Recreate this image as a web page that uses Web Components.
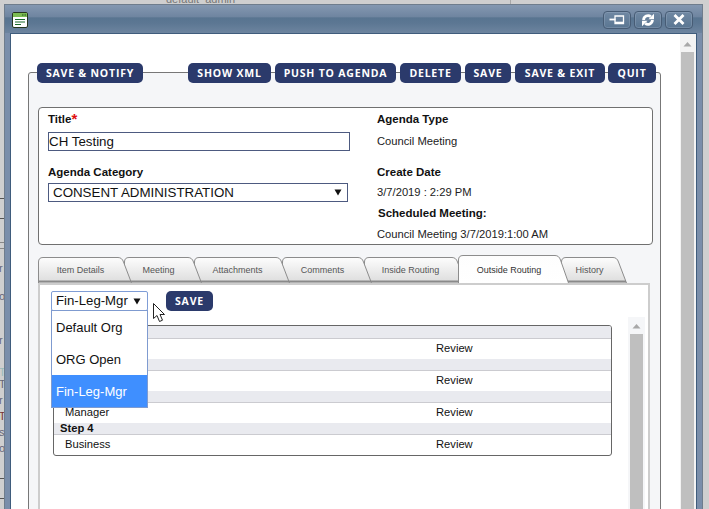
<!DOCTYPE html>
<html lang="en">
<head>
<meta charset="utf-8">
<title>Agenda Item</title>
<style>
  html, body { margin: 0; padding: 0; width: 709px; height: 509px; overflow: hidden; }
  body { font-family: "Liberation Sans", Arial, sans-serif; color: #111; }
  agenda-form { display: block; }
</style>
</head>
<body>
<page-backdrop>
  <app-window>
    <agenda-form></agenda-form>
  </app-window>
</page-backdrop>

<script>
// Grey page behind the modal window, only its edges are visible
class PageBackdrop extends HTMLElement {
  constructor() {
    super();
    this.attachShadow({ mode: "open" });
    this.shadowRoot.innerHTML = `
      <style>
        :host {
          display: grid;
          grid-template-columns: 4px 699px 6px;
          grid-template-rows: 4px 505px;
          width: 709px;
          height: 509px;
          background: #cfcfcf;
          overflow: hidden;
        }
        .top {
          grid-column: 1 / 4;
          display: flex;
          overflow: hidden;
          font-size: 11px;
          line-height: 12px;
          color: #777;
        }
        .top span { margin: -7px 0 0 166px; width: 344px; }
        .top i { width: 1px; background: #a8a8a8; }
        .left {
          display: flex;
          flex-direction: column;
          overflow: hidden;
          font-size: 11px;
          line-height: 12px;
          color: #667;
        }
        .left hr { margin: 0; border: 0; height: 1px; background: #555; flex: none; }
        .left span { margin-left: -1px; height: 12px; flex: none; }
      </style>
      <div class="top"><span>default_admin</span><i></i></div>
      <div class="left">
        <hr style="margin-top:194px"><hr style="margin-top:19px">
        <hr style="margin-top:23px;background:#888"><hr style="margin-top:5px;background:#888">
        <span style="margin-top:13px">r</span>
        <span style="margin-top:16px">o</span>
        <span style="margin-top:32px">r</span>
        <span style="margin-top:20px;color:#9bb">T</span>
        <span>T</span>
        <span style="margin-top:4px">r</span>
        <span style="margin-top:4px;color:#733">T</span>
        <span style="margin-top:4px">s</span>
        <span style="margin-top:4px">o</span>
        <hr style="margin-top:24px"><hr style="margin-top:19px">
      </div>
      <slot></slot>`;
  }
}

// Window frame with the title bar and its three buttons
class AppWindow extends HTMLElement {
  constructor() {
    super();
    this.attachShadow({ mode: "open" });
    this.shadowRoot.innerHTML = `
      <style>
        :host {
          display: flex;
          flex-direction: column;
          box-sizing: border-box;
          width: 699px;
          height: 505px;
          border: 1px solid #6f7d8c;
          border-bottom: 0;
          background: #7a8eaa;
        }
        .title {
          flex: none;
          display: flex;
          align-items: center;
          height: 28px;
          padding: 0 9px 0 7px;
          background: linear-gradient(#8498b1 0, #6f85a0 42%, #587490 46%, #5c7793 65%, #6d849f 100%);
        }
        .icon { display: block; margin-top: 1px; }
        .actions { margin-left: auto; display: flex; gap: 3px; margin-top: 1px; }
        .actions button {
          width: 28px;
          height: 18px;
          padding: 0;
          display: flex;
          align-items: center;
          justify-content: center;
          border: 1px solid #475c75;
          border-radius: 4px;
          box-shadow: inset 0 0 0 1px rgba(190, 205, 225, .22);
          background: linear-gradient(#7088a3, #5a7692);
        }
        .frame {
          flex: 1;
          min-height: 0;
          margin: 0 5px;
          border: 1px solid #3f5c7c;
          border-bottom: 0;
          background: #fff;
          display: grid;
          grid-template-columns: 669px 17px;
          overflow: hidden;
        }
      </style>
      <div class="title">
        <svg class="icon" width="16" height="16" viewBox="0 0 16 16">
          <rect x=".5" y=".5" width="15" height="15" rx="1.5" fill="#fff" stroke="#26361f"/>
          <rect x="1" y="1" width="14" height="4" fill="#7cbc52"/>
          <path d="M10 3h1.500M12.500 3h1.500" stroke="#20501c" stroke-width="1.200"/>
          <path d="M3 7.500h10M3 10h10M3 12.500h6" stroke="#1b6a2a" stroke-width="1.100"/>
        </svg>
        <div class="actions">
          <button aria-label="Pin">
            <svg width="16" height="12" viewBox="0 0 16 12">
              <path d="M.5 5.500h6" stroke="#fff" stroke-width="1.800"/>
              <path d="M6 2v7.500h8.500V2z" fill="none" stroke="#fff" stroke-width="1.300"/>
              <path d="M6 8.500h8.500" stroke="#fff" stroke-width="1.600"/>
            </svg>
          </button>
          <button aria-label="Refresh">
            <svg width="14" height="14" viewBox="0 0 14 14">
              <path d="M2.600 7A4.400 4.400 0 0 1 9.800 3.700" fill="none" stroke="#fff" stroke-width="2.800"/>
              <path d="M7.500 6.200h5.500V.8z" fill="#fff"/>
              <path d="M11.400 7A4.400 4.400 0 0 1 4.200 10.300" fill="none" stroke="#fff" stroke-width="2.800"/>
              <path d="M6.500 7.800H1v5.400z" fill="#fff"/>
            </svg>
          </button>
          <button aria-label="Close">
            <svg width="14" height="11" viewBox="0 0 14 11">
              <path d="M2.500 1l9 9M11.500 1l-9 9" stroke="#fff" stroke-width="2.800"/>
            </svg>
          </button>
        </div>
      </div>
      <div class="frame">
        <div><slot></slot></div>
        <app-scrollbar style="--track:#f3f3f3"></app-scrollbar>
      </div>`;
  }
}

// Vertical scrollbar, only the top arrow and the thumb
class AppScrollbar extends HTMLElement {
  constructor() {
    super();
    this.attachShadow({ mode: "open" });
    this.shadowRoot.innerHTML = `
      <style>
        :host {
          display: flex;
          flex-direction: column;
          align-items: center;
          box-sizing: border-box;
          width: 17px;
          background: var(--track, #f3f3f3);
          padding: 0 3px 0 1px;
        }
        svg { flex: none; margin: var(--arrow-top, 6px) 0 3px; display: block; }
        .thumb { flex: 1; width: 13px; background: #bfbfbf; }
      </style>
      <svg width="9" height="9" viewBox="0 0 9 9"><path d="M4.500 2L8.500 6.500H.5z" fill="#a8a8a8"/></svg>
      <div class="thumb"></div>`;
  }
}

// Dark blue rounded action button
class AppButton extends HTMLElement {
  constructor() {
    super();
    this.attachShadow({ mode: "open" });
    this.shadowRoot.innerHTML = `
      <style>
        :host {
          display: inline-flex;
          align-items: center;
          justify-content: center;
          box-sizing: border-box;
          height: 20px;
          flex: none;
          border-radius: 5px;
          background: #2b3a6b;
          color: #fff;
          font: 700 10.500px/20px "Open Sans", sans-serif;
          letter-spacing: .8px;
          white-space: nowrap;
        }
      </style>
      <slot></slot>`;
  }
}

// Tab drawn as an svg shape: rounded on the left, slanted on the right
class FolderTab extends HTMLElement {
  static get observedAttributes() {
    return ["active", "width"];
  }

  connectedCallback() {
    if (!this.shadowRoot) this.attachShadow({ mode: "open" });
    this._render();
  }

  attributeChangedCallback() {
    if (this.shadowRoot) this._render();
  }

  _render() {
    const active = this.hasAttribute("active");
    const w = Number(this.getAttribute("width"));
    const h = active ? 28 : 26;
    const shape = `M.5 ${h}V5Q.5 .5 5 .5H${w - 14}Q${w - 10} .5 ${w - 8.5} 5L${w - .5} ${h}`;
    const id = active ? "on" : "off";
    this.shadowRoot.innerHTML = `
      <style>
        :host {
          display: flex;
          align-items: center;
          justify-content: center;
          position: relative;
          box-sizing: border-box;
          width: ${w}px;
          height: ${h}px;
          padding: ${active ? "1px 9px 0 0" : "0 9px 0 0"};
          margin-left: -8px;
          font-size: 9px;
          color: ${active ? "#333" : "#555"};
          flex: none;
        }
        :host(:first-child) { margin-left: 0; }
        svg { position: absolute; left: 0; top: 0; }
        span { position: relative; }
      </style>
      <svg width="${w}" height="${h}" viewBox="0 0 ${w} ${h}">
        <defs>
          <linearGradient id="${id}" x1="0" y1="0" x2="0" y2="1">
            <stop offset="0" stop-color="#fdfdfd"/>
            <stop offset="1" stop-color="${active ? "#fff" : "#dcdcdc"}"/>
          </linearGradient>
        </defs>
        <path d="${shape}Z" fill="url(#${id})" stroke="none"/>
        <path d="${shape}" fill="none" stroke="#8c8c8c"/>
        ${active ? "" : `<path d="M1 ${h - 1.5}H${w - 1}" stroke="#8a8a8a" stroke-width="2"/>`}
      </svg>
      <span><slot></slot></span>`;
  }
}

// Open drop-down with the organisation list
class OrgSelect extends HTMLElement {
  constructor() {
    super();
    this.attachShadow({ mode: "open" });
    this.shadowRoot.innerHTML = `
      <style>
        :host {
          display: block;
          position: relative;
          flex: none;
          width: 97px;
          height: 20px;
          font-size: 13.200px;
          color: #111;
        }
        .value {
          display: flex;
          align-items: center;
          box-sizing: border-box;
          height: 20px;
          padding: 0 6px 2px 4px;
          border: 1.500px solid #7f9dd6;
          border-radius: 2px;
          background: #fff;
        }
        .value svg { margin: 2px 0 0 auto; }
        ul {
          position: absolute;
          left: 0;
          top: 19px;
          z-index: 3;
          box-sizing: border-box;
          width: 97px;
          margin: 0;
          padding: 0;
          list-style: none;
          background: #fff;
          border: 1px solid #7f9bd0;
        }
        li { height: 32px; line-height: 33px; padding-left: 4px; font-size: 13px; }
        li.on { background: #3f8fff; color: #fff; }
      </style>
      <div class="value">
        <span>Fin-Leg-Mgr</span>
        <svg width="8" height="7" viewBox="0 0 8 7"><path d="M.5 .5h7L4 6.500z" fill="#111"/></svg>
      </div>
      <ul>
        <li>Default Org</li>
        <li>ORG Open</li>
        <li class="on">Fin-Leg-Mgr</li>
      </ul>`;
  }
}

// One routing step: grey band with the step name, then the reviewer row
class RouteStep extends HTMLElement {
  constructor() {
    super();
    this.attachShadow({ mode: "open" });
    const step = this.getAttribute("step") || "";
    const who = this.getAttribute("who") || "";
    const action = this.getAttribute("action") || "";
    this.shadowRoot.innerHTML = `
      <style>
        :host { display: block; font-size: 11.200px; color: #111; }
        .band {
          box-sizing: border-box;
          height: var(--band, 12px);
          line-height: 11px;
          padding-left: 6px;
          font-weight: 700;
          background: #e9eaef;
          border-bottom: 1px solid #cbcbd0;
        }
        .row { display: grid; grid-template-columns: 382px 1fr; height: 20px; line-height: 18px; padding-left: 11px; }
        .row span:first-child { margin-right: -11px; }
        .row span:last-child { margin-left: -11px; }
      </style>
      <div class="band">${step}</div>
      <div class="row"><span>${who}</span><span>${action}</span></div>`;
  }
}

// Main form: toolbar, details card, tabs and routing table
class AgendaForm extends HTMLElement {
  constructor() {
    super();
    this.attachShadow({ mode: "open" });
    this.shadowRoot.innerHTML = `
      <style>
        :host { display: block; height: 475px; font-size: 11.200px; overflow: hidden; }
        .toolbar {
          position: relative;
          z-index: 1;
          display: flex;
          gap: 4px;
          margin: 29px 0 -11px 17px;
          width: 633px;
          box-sizing: border-box;
          padding: 0 5px 0 9px;
        }
        .toolbar .split { margin-left: 41px; }
        .panel {
          box-sizing: border-box;
          width: 633px;
          height: 460px;
          margin-left: 17px;
          padding: 34px 7px 0 9px;
          border: 1.500px solid #777;
          border-radius: 3px 3px 0 0;
          background: #f5f6f8;
        }
        .card {
          box-sizing: border-box;
          height: 138px;
          padding: 4px 9px 0;
          border: 1px solid #707070;
          border-radius: 4px;
          background: #fff;
          display: grid;
          grid-template-columns: 329px 1fr;
        }
        .col { display: flex; flex-direction: column; }
        label, .head { display: block; height: 14px; line-height: 14px; font-size: 11.500px; font-weight: 700; color: #111; }
        label b { color: #e01010; font-size: 15px; line-height: 0; vertical-align: -1px; }
        .val { display: block; height: 14px; line-height: 14px; color: #222; }
        .input, .select {
          box-sizing: border-box;
          height: 19px;
          line-height: 17px;
          font-size: 13.330px;
          border: 1px solid #4d5a80;
          color: #111;
        }
        .input { width: 302px; margin-top: 6px; }
        .select {
          width: 300px;
          margin-top: 4px;
          padding: 0 5px 0 4px;
          display: flex;
          align-items: center;
        }
        .select svg { margin-left: auto; }
        .tabs { display: flex; align-items: flex-end; margin-top: 10px; height: 28px; position: relative; z-index: 1; }
        .tabs folder-tab:nth-child(1) { z-index: 7; }
        .tabs folder-tab:nth-child(2) { z-index: 6; }
        .tabs folder-tab:nth-child(3) { z-index: 5; }
        .tabs folder-tab:nth-child(4) { z-index: 4; }
        .tabs folder-tab:nth-child(5) { z-index: 3; }
        .tabs folder-tab:nth-child(6) { z-index: 8; }
        .tabs folder-tab:nth-child(7) { z-index: 1; }
        .tab-body {
          position: relative;
          box-sizing: border-box;
          width: 612px;
          height: 250px;
          padding: 6px 0 0 11px;
          background: #fff;
          border: 2px solid #cdcdcd;
          border-bottom: 0;
        }
        .controls { display: flex; gap: 18px; }
        .content { display: flex; gap: 16px; margin: 14px 0 0 2px; align-items: flex-start; }
        .table {
          box-sizing: border-box;
          width: 559px;
          flex: none;
          border: 1px solid #666;
          border-radius: 3px;
          overflow: hidden;
        }
        .inner-scroll { flex: none; margin-top: -8px; height: 200px; padding: 0 2px; width: 17px; --track: #f5f6f8; --arrow-top: 5px; }
        .pointer { position: absolute; left: 113px; top: 18px; z-index: 4; }
      </style>
      <div class="toolbar">
        <app-button style="width:106px">SAVE &amp; NOTIFY</app-button>
        <app-button class="split" style="width:83px">SHOW XML</app-button>
        <app-button style="width:121px">PUSH TO AGENDA</app-button>
        <app-button style="width:61px">DELETE</app-button>
        <app-button style="width:46px">SAVE</app-button>
        <app-button style="width:90px">SAVE &amp; EXIT</app-button>
        <app-button style="width:48px;margin-left:-1px">QUIT</app-button>
      </div>
      <div class="panel">
        <div class="card">
          <div class="col">
            <label>Title<b>*</b></label>
            <div class="input">CH Testing</div>
            <label style="margin-top:14px">Agenda Category</label>
            <div class="select">
              <span>CONSENT ADMINISTRATION</span>
              <svg width="8" height="7" viewBox="0 0 8 7"><path d="M.5 .5h7L4 6.500z" fill="#111"/></svg>
            </div>
          </div>
          <div class="col">
            <div class="head">Agenda Type</div>
            <div class="val" style="margin-top:8px">Council Meeting</div>
            <div class="head" style="margin-top:17px">Create Date</div>
            <div class="val" style="margin-top:6px">3/7/2019 : 2:29 PM</div>
            <div class="head" style="margin:7px 0 0 1px">Scheduled Meeting:</div>
            <div class="val" style="margin-top:7px">Council Meeting 3/7/2019:1:00 AM</div>
          </div>
        </div>
        <div class="tabs">
          <folder-tab width="94">Item Details</folder-tab>
          <folder-tab width="78">Meeting</folder-tab>
          <folder-tab width="96">Attachments</folder-tab>
          <folder-tab width="90">Comments</folder-tab>
          <folder-tab width="102">Inside Routing</folder-tab>
          <folder-tab width="111" active>Outside Routing</folder-tab>
          <folder-tab width="66">History</folder-tab>
        </div>
        <div class="tab-body">
          <div class="controls">
            <org-select></org-select>
            <app-button style="width:47px">SAVE</app-button>
          </div>
          <div class="content">
            <div class="table">
              <!-- los nombres de los pasos 1 a 3 quedan tapados por el desplegable -->
              <route-step style="--band:13px" action="Review"></route-step>
              <route-step action="Review"></route-step>
              <route-step who="Manager" action="Review"></route-step>
              <route-step step="Step 4" who="Business" action="Review"></route-step>
            </div>
            <app-scrollbar class="inner-scroll"></app-scrollbar>
          </div>
          <svg class="pointer" width="13" height="20" viewBox="0 0 13 20">
            <path d="M.5 .5V15.500L4 12.500L6.500 18.500L9.500 17.200L7 11.500H11.500Z" fill="#fff" stroke="#222"/>
          </svg>
        </div>
      </div>`;
  }
}

customElements.define("page-backdrop", PageBackdrop);
customElements.define("app-scrollbar", AppScrollbar);
customElements.define("app-window", AppWindow);
customElements.define("app-button", AppButton);
customElements.define("folder-tab", FolderTab);
customElements.define("org-select", OrgSelect);
customElements.define("route-step", RouteStep);
customElements.define("agenda-form", AgendaForm);
</script>
</body>
</html>
